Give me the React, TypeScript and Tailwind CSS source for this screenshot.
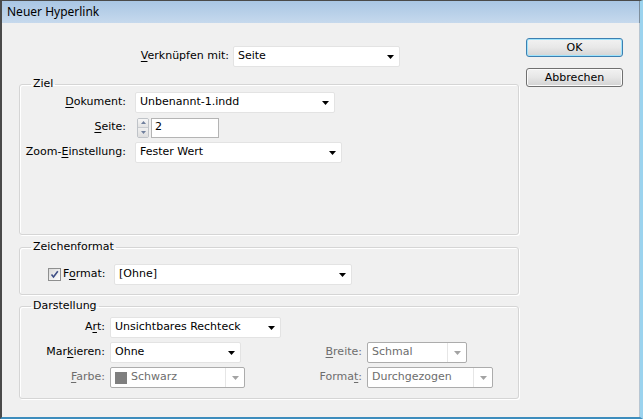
import React from "react";

function Arrow({ disabled }: { disabled?: boolean }) {
  return (
    <svg width="7" height="4" viewBox="0 0 7 4">
      <path d="M0 0H7L3.5 4Z" fill={disabled ? "#a3a3a3" : "#000"} />
    </svg>
  );
}

function Select({
  className,
  value,
  disabled,
  swatch,
}: {
  className: string;
  value: string;
  disabled?: boolean;
  swatch?: boolean;
}) {
  if (disabled) {
    return (
      <div
        className={
          "h-[21px] flex items-stretch bg-white border border-[#acacac] rounded-[2px] " +
          className
        }
      >
        <div className="flex-1 flex items-center pl-[4px] text-[#6d6d6d] gap-[4px] border-r border-[#e6e6e6]">
          {swatch && <div className="w-[12px] h-[12px] bg-[#7f7f7f]" />}
          <span>{value}</span>
        </div>
        <div className="w-[18px] flex items-center justify-center">
          <Arrow disabled />
        </div>
      </div>
    );
  }
  return (
    <div
      className={
        "h-[21px] flex items-center bg-white border border-[#e3e3e3] rounded-[2px] " +
        className
      }
    >
      <span className="flex-1 pl-[4px] text-black">{value}</span>
      <div className="w-[17px] flex items-center justify-center">
        <Arrow />
      </div>
    </div>
  );
}

function U({ children }: { children: React.ReactNode }) {
  return <span className="underline underline-offset-[2px]">{children}</span>;
}

function Group({
  title,
  className,
  children,
}: {
  title: string;
  className: string;
  children: React.ReactNode;
}) {
  return (
    <fieldset
      className={
        "border border-[#d5d5d5] rounded-[3px] shadow-[inset_1px_1px_0_#ffffff,1px_1px_0_#ffffff] " +
        className
      }
    >
      <legend className="ml-[11px] px-[2px] leading-[14px] text-black">{title}</legend>
      {children}
    </fieldset>
  );
}

export default function App() {
  return (
    <div className="w-[643px] h-[419px] flex flex-col bg-[#f0f0f0] border-t border-t-[#4a4a4a] border-l-2 border-l-[#4a4a4a] border-r-[3px] border-r-[#9bd3ee] border-b-2 border-b-[#3d8dbd] font-['DejaVu_Sans',sans-serif] text-[11px] text-black overflow-hidden">
      <div className="h-[22px] shrink-0 flex items-center pl-[5px] bg-linear-to-b from-[#a9c6e4] to-[#c6d9ed] border-r border-r-[#7e8e9c] font-['Noto_Sans',sans-serif] text-[12px] text-black">
        Neuer Hyperlink
      </div>
      <div className="flex-1 flex border-r border-r-[#b8c6d2]">
        <div className="ml-[17px] w-[500px] pt-[23px] flex flex-col">
          <div className="flex items-center h-[21px]">
            <div className="w-[211px] text-right pr-[1px]">
              <U>V</U>erknüpfen mit:
            </div>
            <Select className="ml-[3px] w-[167px]" value="Seite" />
          </div>

          <Group title="Ziel" className="mt-[10px] pt-[1px] pb-[71px]">
            <div className="grid grid-cols-[115px_1fr] gap-y-[4px] items-center">
              <div className="text-right pr-[9px]">
                <U>D</U>okument:
              </div>
              <Select className="w-[200px]" value="Unbenannt-1.indd" />
              <div className="text-right pr-[9px]">
                <U>S</U>eite:
              </div>
              <div className="flex items-center h-[21px] ml-[2px]">
                <div className="w-[12px] h-[20px] flex flex-col border border-[#bfc3c8] rounded-[2px] overflow-hidden">
                  <div className="flex-1 flex items-center justify-center bg-linear-to-b from-[#f7f7f7] to-[#e3e3e3] border-b border-[#c9ccd0]">
                    <svg width="5" height="3" viewBox="0 0 5 3">
                      <path d="M0 3H5L2.5 0Z" fill="#6f7f9c" />
                    </svg>
                  </div>
                  <div className="flex-1 flex items-center justify-center bg-linear-to-b from-[#f0f0f0] to-[#dedede]">
                    <svg width="5" height="3" viewBox="0 0 5 3">
                      <path d="M0 0H5L2.5 3Z" fill="#6f7f9c" />
                    </svg>
                  </div>
                </div>
                <div className="ml-[2px] w-[68px] h-[20px] bg-white border border-[#b4b4b4] flex items-center pl-[3px]">
                  2
                </div>
              </div>
              <div className="text-right pr-[9px]">
                Zoom-<U>E</U>instellung:
              </div>
              <Select className="w-[207px]" value="Fester Wert" />
            </div>
          </Group>

          <Group title="Zeichenformat" className="mt-[5px] pt-[10px] pb-[9px]">
            <div className="flex items-center h-[21px]">
              <div className="ml-[28px] w-[13px] h-[13px] border border-[#8e8f8f] bg-linear-to-br from-[#dadada] to-[#ffffff] flex items-center justify-center">
                <svg width="9" height="9" viewBox="0 0 9 9">
                  <path
                    d="M1.5 4.5L3.5 7L7.8 1.2"
                    fill="none"
                    stroke="#3f4f86"
                    strokeWidth="1.6"
                  />
                </svg>
              </div>
              <div className="ml-[2px] w-[49px]">
                F<U>o</U>rmat:
              </div>
              <Select className="ml-[2px] w-[238px]" value="[Ohne]" />
            </div>
          </Group>

          <Group title="Darstellung" className="mt-[4px] pt-[4px] pb-[10px]">
            <div className="grid grid-cols-[90px_139px_118px_1fr] gap-y-[4px] items-center">
              <div className="text-right pr-[5px]">
                A<U>r</U>t:
              </div>
              <div className="col-span-3">
                <Select className="w-[171px]" value="Unsichtbares Rechteck" />
              </div>

              <div className="text-right pr-[5px]">
                Mar<U>k</U>ieren:
              </div>
              <Select className="w-[131px]" value="Ohne" />
              <div className="text-right pr-[5px] text-[#6d6d6d]">
                <U>B</U>reite:
              </div>
              <Select className="w-[100px]" value="Schmal" disabled />

              <div className="text-right pr-[5px] text-[#6d6d6d]">
                <U>F</U>arbe:
              </div>
              <Select className="w-[135px]" value="Schwarz" disabled swatch />
              <div className="text-right pr-[5px] text-[#6d6d6d]">
                Forma<U>t</U>:
              </div>
              <Select className="w-[126px]" value="Durchgezogen" disabled />
            </div>
          </Group>
        </div>

        <div className="ml-[7px] w-[97px] pt-[15px] flex flex-col">
          <button className="h-[19px] w-[97px] rounded-[3px] border border-[#3c7fb1] bg-linear-to-b from-[#f2f2f2] via-[#e8e8e8] to-[#d4d4d4] shadow-[inset_0_0_0_1px_#9fe3fb] flex items-center justify-center leading-none">
            OK
          </button>
          <button className="mt-[11px] h-[19px] w-[97px] rounded-[3px] border border-[#707070] bg-linear-to-b from-[#f2f2f2] via-[#e6e6e6] to-[#d2d2d2] shadow-[inset_0_0_0_1px_#fbfbfb] flex items-center justify-center leading-none">
            Abbrechen
          </button>
        </div>
      </div>
    </div>
  );
}
